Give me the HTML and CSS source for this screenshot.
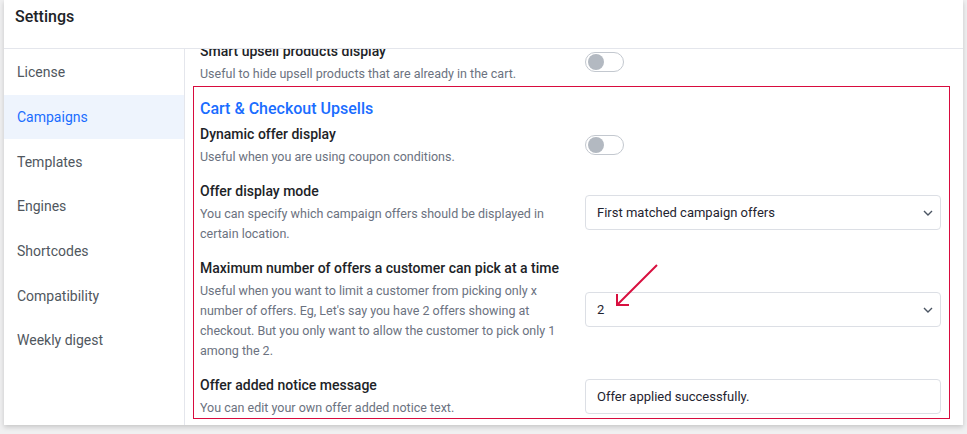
FILE: index.html
```html
<!DOCTYPE html>
<html lang="en">
<head>
<meta charset="utf-8">
<title>Settings</title>
<link rel="stylesheet" href="styles.css">
</head>
<body>
<div class="card">
  <header class="card-header">Settings</header>
  <div class="card-body">
    <nav class="sidebar">
      <a class="nav-item">License</a>
      <a class="nav-item active">Campaigns</a>
      <a class="nav-item">Templates</a>
      <a class="nav-item">Engines</a>
      <a class="nav-item">Shortcodes</a>
      <a class="nav-item">Compatibility</a>
      <a class="nav-item">Weekly digest</a>
    </nav>
    <main class="content">
      <div class="scroller">
        <div class="row row-outer">
          <div class="text">
            <div class="label">Smart upsell products display</div>
            <div class="desc">Useful to hide upsell products that are already in the cart.</div>
          </div>
          <div class="control"><span class="toggle"><span class="knob"></span></span></div>
        </div>
        <section class="section">
          <h2 class="section-title">Cart &amp; Checkout Upsells</h2>
          <div class="row">
            <div class="text">
              <div class="label">Dynamic offer display</div>
              <div class="desc">Useful when you are using coupon conditions.</div>
            </div>
            <div class="control"><span class="toggle"><span class="knob"></span></span></div>
          </div>
          <div class="row">
            <div class="text">
              <div class="label">Offer display mode</div>
              <div class="desc">You can specify which campaign offers should be displayed in certain location.</div>
            </div>
            <div class="control">
              <div class="select">First matched campaign offers
                <svg class="chev" width="10" height="6" viewBox="0 0 10 6"><path d="M1 1l4 4 4-4" fill="none" stroke="#4b5563" stroke-width="1.4"/></svg>
              </div>
            </div>
          </div>
          <div class="row">
            <div class="text">
              <div class="label">Maximum number of offers a customer can pick at a time</div>
              <div class="desc">Useful when you want to limit a customer from picking only x number of offers. Eg, Let's say you have 2 offers showing at checkout. But you only want to allow the customer to pick only 1 among the 2.</div>
            </div>
            <div class="control">
              <div class="select">2
                <svg class="chev" width="10" height="6" viewBox="0 0 10 6"><path d="M1 1l4 4 4-4" fill="none" stroke="#4b5563" stroke-width="1.4"/></svg>
              </div>
            </div>
          </div>
          <div class="row">
            <div class="text">
              <div class="label">Offer added notice message</div>
              <div class="desc">You can edit your own offer added notice text.</div>
            </div>
            <div class="control">
              <div class="input">Offer applied successfully.</div>
            </div>
          </div>
        </section>
      </div>
    </main>
  </div>
  <svg class="arrow" width="50" height="48" viewBox="0 0 50 48"><path d="M46 2L7 41M6 31v11h12" fill="none" stroke="#d8103f" stroke-width="2"/></svg>
</div>
</body>
</html>
```
FILE: styles.css
```css
* { box-sizing: border-box; }
html, body { margin: 0; padding: 0; }
body {
  background: #f0f0f1;
  width: 967px;
  height: 434px;
  overflow: hidden;
  font-family: Roboto, "Liberation Sans", sans-serif;
}
.card {
  position: relative;
  margin-left: 4px;
  width: 959px;
  height: 425px;
  background: #fff;
  box-shadow: 0 2px 5px rgba(0,0,0,0.18);
  display: flex;
  flex-direction: column;
}
.card-header {
  height: 49px;
  padding: 7px 11px;
  font-size: 16px;
  font-weight: 500;
  color: #1d2327;
  border-bottom: 1px solid #e4e6ec;
  line-height: 20px;
}
.card-body {
  flex: 1;
  display: flex;
  min-height: 0;
}
.sidebar {
  width: 181px;
  padding-top: 1px;
  border-right: 1px solid #e4e6ec;
  display: flex;
  flex-direction: column;
}
.nav-item {
  height: 44.7px;
  flex: none;
  display: flex;
  align-items: center;
  padding-left: 13px;
  font-size: 14px;
  color: #50575e;
}
.nav-item.active {
  background: #eef4fd;
  color: #1a6dff;
}
.content {
  flex: 1;
  overflow: hidden;
  padding: 0 13px 0 8px;
}
.scroller {
  margin-top: -8px;
}
.row {
  display: grid;
  grid-template-columns: 360px 356px;
  column-gap: 25px;
  align-items: center;
  margin-bottom: 14px;
}
.row-outer {
  padding-left: 7px;
  margin-bottom: 2px;
}
.section {
  border: 1px solid #d80b3e;
  padding: 10px 8px 0 6px;
}
.section .row:last-child { margin-bottom: 0; }
.section-title {
  margin: 0 0 3px;
  font-size: 16px;
  line-height: 24px;
  font-weight: 500;
  color: #1a6dff;
}
.label {
  font-size: 14px;
  line-height: 20px;
  font-weight: 500;
  color: #1d2327;
}
.desc {
  margin-top: 3px;
  font-size: 12.5px;
  line-height: 20px;
  color: #6b7280;
}
.toggle {
  display: inline-flex;
  align-items: center;
  width: 39px;
  height: 20px;
  border: 1px solid #c3c8cf;
  border-radius: 10px;
  padding: 0 2px;
  background: #fff;
}
.knob {
  width: 16px;
  height: 16px;
  border-radius: 50%;
  background: #b3b9c1;
}
.select, .input {
  height: 35px;
  border: 1px solid #dcdfe5;
  border-radius: 4px;
  padding: 0 7px 0 11px;
  display: flex;
  align-items: center;
  justify-content: space-between;
  font-size: 13px;
  color: #1f2430;
}
.arrow {
  position: absolute;
  left: 607px;
  top: 263px;
}
```
